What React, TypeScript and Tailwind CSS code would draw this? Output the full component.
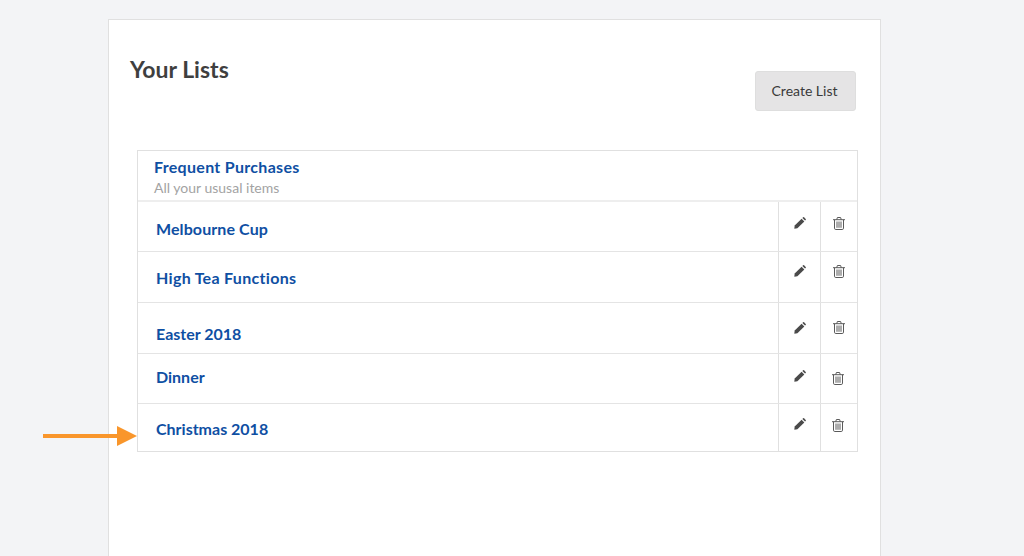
const rows = [
  { name: 'Melbourne Cup', h: 'h-[50px]', text: 'pt-[17px] tracking-[0.1px]', pencil: 'pt-[15px]', trash: 'pt-[15px] pl-[12px]' },
  { name: 'High Tea Functions', h: 'h-[51px]', text: 'pt-[16px] tracking-[0.3px]', pencil: 'pt-[13px]', trash: 'pt-[13px] pl-[12px]' },
  { name: 'Easter 2018', h: 'h-[51px]', text: 'pt-[21px]', pencil: 'pt-[19px]', trash: 'pt-[18px] pl-[12px]' },
  { name: 'Dinner', h: 'h-[50px]', text: 'pt-[13px]', pencil: 'pt-[16px]', trash: 'pt-[18px] pl-[11px]' },
  { name: 'Christmas 2018', h: 'h-[47px]', text: 'pt-[15px]', pencil: 'pt-[14px]', trash: 'pt-[15px] pl-[11px]' },
];

function Pencil() {
  return (
    <svg viewBox="0 0 12 12" className="w-3 h-3 ml-[15px] text-[#4a4a4a]" fill="currentColor">
      <path d="M0.3 11.7 L0.7 8.6 L7.6 1.7 L10.3 4.4 L3.4 11.3 Z" />
      <path d="M8.4 1 L9.1 0.3 Q9.6 -0.1 10.1 0.3 L11.7 1.9 Q12.1 2.4 11.7 2.9 L11 3.6 Z" />
    </svg>
  );
}

function Trash() {
  return (
    <svg viewBox="0 0 12 13" className="w-3 h-[13px] text-[#5a5a5a]" fill="none" stroke="currentColor" strokeWidth="1">
      <path d="M0 2.7 H12" />
      <path d="M3.7 2.7 L4.4 0.5 H7.6 L8.3 2.7" />
      <path d="M1.5 2.7 V11.2 Q1.5 12.5 2.8 12.5 H9.2 Q10.5 12.5 10.5 11.2 V2.7" />
      <path d="M4 4.5 V10.8 M6 4.5 V10.8 M8 4.5 V10.8" />
    </svg>
  );
}

export default function App() {
  return (
    <div className="relative h-[556px] overflow-hidden bg-[#f3f4f6] font-['Lato',sans-serif]">
      <div className="ml-[108px] mt-[19px] w-[773px] h-[600px] bg-white border border-[#e0e0e0] pl-[28px]">
        <div className="flex justify-between items-start pr-[24px]">
          <h1 className="mt-[35px] -ml-[7px] text-[23px] leading-[28px] font-bold text-[#3f3f3f]">Your Lists</h1>
          <button className="mt-[51px] w-[101px] h-[40px] pb-[2px] pr-[2px] rounded-[3px] bg-[#e5e4e5] border border-[#dedede] text-[14px] text-[#3a3a3a]">
            Create List
          </button>
        </div>

        <div className="mt-[39px] w-[721px] border border-[#e0e0e0]">
          <div className="h-[51px] pl-[16px] pt-[6px] border-b-2 border-[#eeeeee]">
            <div className="text-[16px] tracking-[0.3px] leading-[20px] font-bold text-[#0f4fa3]">Frequent Purchases</div>
            <div className="text-[14px] leading-[20px] mt-[1px] text-[#a3a3a3]">All your ususal items</div>
          </div>
          {rows.map((row, i) => (
            <div key={row.name} className={`flex ${row.h} ${i < rows.length - 1 ? 'border-b border-[#e4e4e4]' : ''}`}>
              <div className={`flex-1 pl-[18px] ${row.text} text-[16px] leading-[20px] font-bold text-[#0f4fa3]`}>
                {row.name}
              </div>
              <div className={`w-[42px] border-l border-[#e0e0e0] ${row.pencil}`}>
                <Pencil />
              </div>
              <div className={`w-[37px] border-l border-[#e0e0e0] ${row.trash}`}>
                <Trash />
              </div>
            </div>
          ))}
        </div>
      </div>

      <svg className="absolute left-[43px] top-[426px] w-[94px] h-[20px]" viewBox="0 0 94 20">
        <rect x="0" y="8" width="75" height="4" fill="#f9962b" />
        <path d="M74 0 L94 10 L74 20 Z" fill="#f9962b" />
      </svg>
    </div>
  );
}
